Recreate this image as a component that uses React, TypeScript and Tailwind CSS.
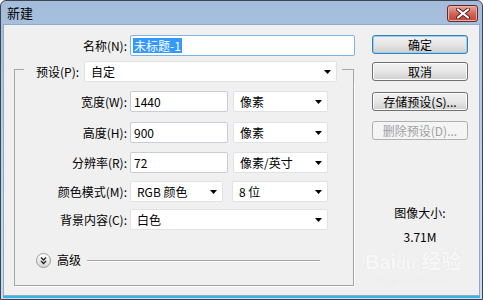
import React from "react";

const FONT = { fontFamily: '"Noto Sans CJK SC", "Liberation Sans", sans-serif' };

function Arrow() {
  return (
    <svg width="7" height="4" viewBox="0 0 7 4" className="ml-auto mr-[5px] shrink-0">
      <path d="M0 0H7L3.5 4Z" fill="#000" />
    </svg>
  );
}

function Field({ w, children }: { w: string; children?: React.ReactNode }) {
  return (
    <div className={`${w} h-[21px] shrink-0 bg-white border border-[#c9ced6] rounded-[2px] flex items-center pl-[3px] text-[12px] text-black`}>
      {children}
    </div>
  );
}

function Select({ w, value, className = "" }: { w: string; value: string; className?: string }) {
  return (
    <div className={`${w} ${className} h-[21px] shrink-0 bg-white border border-[#dfe3e8] rounded-[2px] flex items-center pl-[6px] text-[12px] text-black`}>
      <span>{value}</span>
      <Arrow />
    </div>
  );
}

function Row({ label, mt, children }: { label: string; mt: string; children: React.ReactNode }) {
  return (
    <div className={`flex items-center ${mt}`}>
      <div className="w-[112px] text-right text-[12px] text-black shrink-0">{label}</div>
      <div className="ml-[3px] flex items-center">{children}</div>
    </div>
  );
}

function Button({ label, primary, disabled, mt }: { label: string; primary?: boolean; disabled?: boolean; mt: string }) {
  const base = "w-[96px] h-[19px] rounded-[3px] flex items-center justify-center text-[12px] border";
  const look = disabled
    ? "border-[#adb2b5] bg-[#f4f4f4] text-[#a0a0a0]"
    : primary
    ? "border-[#3c7fb1] bg-gradient-to-b from-[#f2f2f2] via-[#e6e6e6] to-[#cfcfcf] text-black shadow-[inset_0_0_0_1px_#8fd3f5]"
    : "border-[#707070] bg-gradient-to-b from-[#f2f2f2] via-[#e6e6e6] to-[#cfcfcf] text-black shadow-[inset_0_0_0_1px_#fcfcfc]";
  return <div className={`${base} ${look} ${mt}`}>{label}</div>;
}

export default function App() {
  return (
    <div style={FONT} className="w-[483px] h-[300px] flex flex-col border border-[#3d4550] rounded-t-[6px] bg-gradient-to-b from-[#a3bcdb] via-[#bcd1e9] to-[#c9dbee] overflow-hidden">
      {/* title bar */}
      <div className="h-[23px] flex items-center justify-between pl-[6px] shrink-0">
        <span className="text-[13px] text-black">新建</span>
        <div className="mr-[4px] mt-[2px] w-[31px] h-[17px] rounded-[3px] border border-[#5e2a2a] bg-gradient-to-b from-[#e8a598] via-[#d0685a] to-[#c2402f] flex items-center justify-center shadow-[inset_0_0_0_1px_#eeb0a5]">
          <svg width="14" height="11" viewBox="0 0 14 11">
            <path d="M2 1.5L12 9.5M12 1.5L2 9.5" stroke="#5a2222" strokeWidth="4" strokeLinecap="round" />
            <path d="M2 1.5L12 9.5M12 1.5L2 9.5" stroke="#fff" strokeWidth="2.2" strokeLinecap="round" />
          </svg>
        </div>
      </div>

      {/* client area */}
      <div className="relative flex-1 mx-[2px] mb-[3px] bg-[#f0f0f0] border border-[#8fa9c8] shadow-[0_2px_0_#3ab4e6] flex">
        {/* left */}
        <div className="w-[356px] shrink-0 flex flex-col">
          <div className="flex items-center mt-[10px]">
            <div className="w-[123px] text-right text-[12px] text-black">名称(N):</div>
            <div className="ml-[3px] w-[225px] h-[21px] bg-white border border-[#7eb4ea] rounded-[2px] flex items-center pl-[2px] text-[12px]">
              <span className="bg-[#3399ff] text-white leading-[15px] px-[1px]">未标题-1</span>
            </div>
          </div>

          {/* group box */}
          <div className="ml-[10px] w-[340px] mt-[5px] flex flex-col">
            <div className="flex h-[21px]">
              <div className="w-[10px] mt-[8px] border-t border-l border-[#a5a5a5] shrink-0" />
              <div className="ml-[12px] text-[12px] text-black self-center">预设(P):</div>
              <Select w="w-[253px]" value="自定" className="ml-[5px]" />
              <div className="flex-1 ml-[5px] mt-[8px] border-t border-r border-[#a5a5a5]" />
            </div>
            <div className="border-l border-r border-b border-[#a5a5a5] shadow-[1px_1px_0_#fff] pt-[9px] pb-[16px]">
              <Row label="宽度(W):" mt="mt-0">
                <Field w="w-[98px]">1440</Field>
                <Select w="w-[95px]" value="像素" className="ml-[5px]" />
              </Row>
              <Row label="高度(H):" mt="mt-[10px]">
                <Field w="w-[98px]">900</Field>
                <Select w="w-[95px]" value="像素" className="ml-[5px]" />
              </Row>
              <Row label="分辨率(R):" mt="mt-[9px]">
                <Field w="w-[98px]">72</Field>
                <Select w="w-[95px]" value="像素/英寸" className="ml-[5px]" />
              </Row>
              <Row label="颜色模式(M):" mt="mt-[8px]">
                <Select w="w-[93px]" value="RGB 颜色" />
                <Select w="w-[96px]" value="8 位" className="ml-[9px]" />
              </Row>
              <Row label="背景内容(C):" mt="mt-[7px]">
                <Select w="w-[198px]" value="白色" />
              </Row>
              <div className="flex items-center mt-[21px] ml-[21px]">
                <svg width="15" height="15" viewBox="0 0 15 15" className="shrink-0">
                  <defs>
                    <linearGradient id="adv" x1="0" y1="0" x2="0" y2="1">
                      <stop offset="0" stopColor="#ffffff" />
                      <stop offset="1" stopColor="#d6d6d6" />
                    </linearGradient>
                  </defs>
                  <circle cx="7.5" cy="7.5" r="7" fill="url(#adv)" stroke="#9a9a9a" />
                  <path d="M5 4.5L7.5 7L10 4.5M5 8L7.5 10.5L10 8" fill="none" stroke="#222" strokeWidth="1.3" />
                </svg>
                <span className="ml-[6px] text-[12px] text-black">高级</span>
                <div className="ml-[6px] w-[233px] h-px bg-[#a5a5a5] shadow-[0_1px_0_#fff]" />
              </div>
            </div>
          </div>
        </div>

        {/* right */}
        <div className="ml-[12px] w-[96px] flex flex-col">
          <Button label="确定" primary mt="mt-[10px]" />
          <Button label="取消" mt="mt-[8px]" />
          <Button label="存储预设(S)..." mt="mt-[11px]" />
          <Button label="删除预设(D)..." disabled mt="mt-[10px]" />
          <div className="mt-[65px] text-center text-[12px] leading-[16px] text-black">图像大小:</div>
          <div className="mt-[8px] text-center text-[12px] leading-[16px] text-black">3.71M</div>
        </div>

        {/* watermark */}
        <div className="absolute left-[361px] top-[226px] flex flex-col items-center text-[#f7f7f7] pointer-events-none [text-shadow:0_0_1px_#dcdcdc]">
          <span className="text-[20px] leading-[22px] font-bold" style={{ fontFamily: '"Liberation Sans", "Noto Sans CJK SC", sans-serif' }}>Bai<span className="text-[16px]">du</span> 经验</span>
          <span className="text-[10px] leading-[12px]" style={{ fontFamily: '"Liberation Serif", serif' }}>jingyan.baidu.com</span>
        </div>
      </div>
    </div>
  );
}
